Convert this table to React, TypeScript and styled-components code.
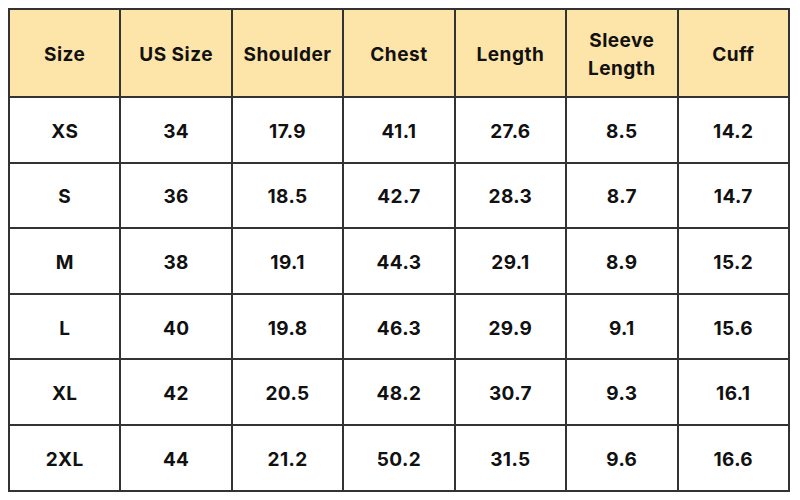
import React from "react";
import styled, { createGlobalStyle } from "styled-components";

const Global = createGlobalStyle`
  html, body { margin: 0; padding: 0; background: #ffffff; }
  body { font-family: Inter, "Open Sans", "Liberation Sans", sans-serif; }
`;

const Page = styled.div`
  width: 800px;
  height: 500px;
  padding: 8px;
  box-sizing: border-box;
  background: #fff;
  overflow: hidden;
`;

const Table = styled.table`
  width: 782px;
  border-collapse: collapse;
  table-layout: fixed;
  border: 2px solid #333;
`;

const HeadCell = styled.th`
  background: #fde4a9;
  border: 2px solid #333;
  height: 83px;
  padding: 3px 2px 0;
  font-size: 19px;
  font-weight: 700;
  letter-spacing: 0.5px;
  line-height: 28px;
  color: #111;
  text-align: center;
  vertical-align: middle;
`;

const Cell = styled.td`
  border: 2px solid #333;
  height: 60.6px;
  padding: 3px 0 0;
  font-size: 19px;
  font-weight: 700;
  letter-spacing: 0.4px;
  color: #111;
  text-align: center;
  vertical-align: middle;
`;

const headers = ["Size", "US Size", "Shoulder", "Chest", "Length", "Sleeve Length", "Cuff"];
const rows = [
  ["XS", "34", "17.9", "41.1", "27.6", "8.5", "14.2"],
  ["S", "36", "18.5", "42.7", "28.3", "8.7", "14.7"],
  ["M", "38", "19.1", "44.3", "29.1", "8.9", "15.2"],
  ["L", "40", "19.8", "46.3", "29.9", "9.1", "15.6"],
  ["XL", "42", "20.5", "48.2", "30.7", "9.3", "16.1"],
  ["2XL", "44", "21.2", "50.2", "31.5", "9.6", "16.6"],
];

export default function App() {
  return (
    <>
      <Global />
      <Page>
        <Table>
          <thead>
            <tr>
              {headers.map((h) => (
                <HeadCell key={h}>
                  {h === "Sleeve Length" ? (
                    <>
                      Sleeve
                      <br />
                      Length
                    </>
                  ) : (
                    h
                  )}
                </HeadCell>
              ))}
            </tr>
          </thead>
          <tbody>
            {rows.map((r) => (
              <tr key={r[0]}>
                {r.map((c, i) => (
                  <Cell key={i}>{c}</Cell>
                ))}
              </tr>
            ))}
          </tbody>
        </Table>
      </Page>
    </>
  );
}
